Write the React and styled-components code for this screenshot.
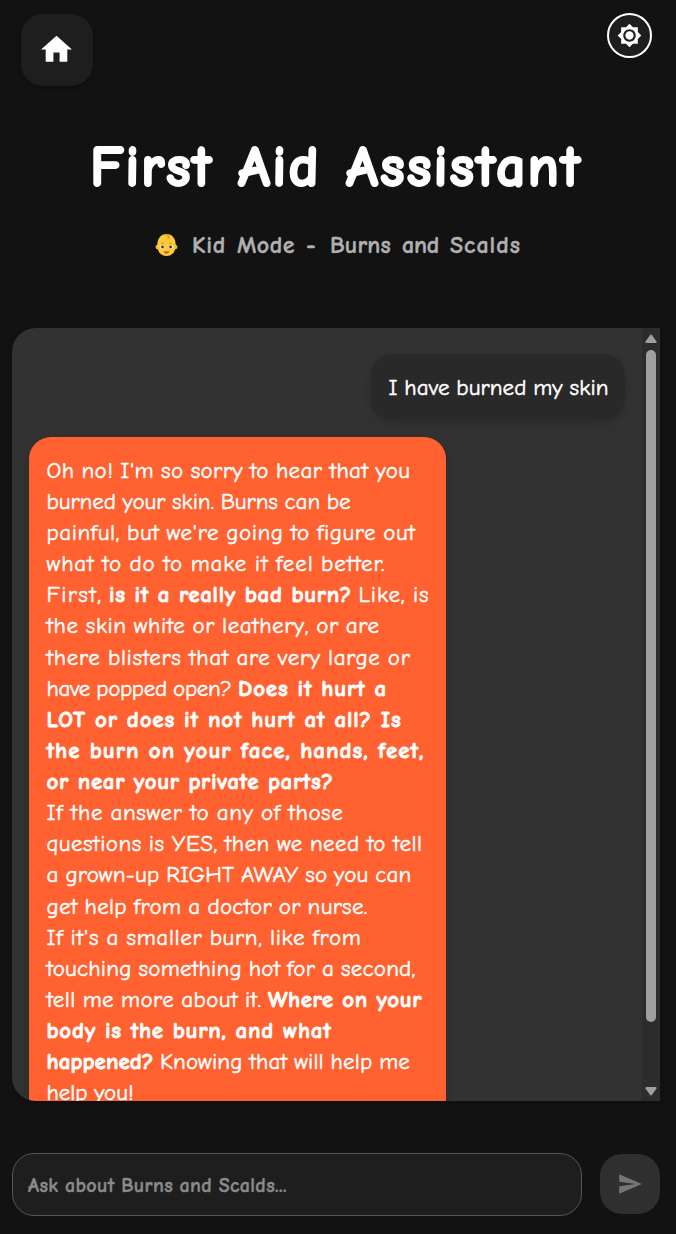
import React, { useLayoutEffect, useRef, useState } from "react";
import styled, { createGlobalStyle } from "styled-components";

const GlobalStyle = createGlobalStyle`
  * { box-sizing: border-box; }
  body {
    margin: 0;
    background: #121212;
    color: #fff;
    font-family: "Comic Sans MS", "Comic Neue", "Open Sans", sans-serif;
    overflow: hidden;
  }
  button { font: inherit; padding: 0; border: 0; color: inherit; }
`;

const Page = styled.main`
  height: 1234px;
  padding: 13px 16px 18px 12px;
  display: flex;
  flex-direction: column;
`;

const TopBar = styled.header`
  display: flex;
  justify-content: space-between;
  align-items: flex-start;
  padding: 0 8px 0 9px;
  height: 73px;
`;

const HomeButton = styled.button`
  display: grid;
  place-items: center;
  width: 72px;
  height: 72px;
  margin-top: 1px;
  padding: 0 1px 1px 0;
  border-radius: 22px;
  background: #1e1e1e;
  box-shadow: 0 2px 5px rgba(0, 0, 0, 0.3);
`;

const ThemeButton = styled.button`
  display: grid;
  place-items: center;
  width: 45px;
  height: 45px;
  padding-bottom: 1px;
  border: 2px solid #fff;
  border-radius: 50%;
  background: #1e1e1e;
`;

const Icon = styled.svg`
  display: block;
  width: ${(p) => p.$size}px;
  height: ${(p) => p.$size}px;
  fill: currentColor;
`;

const Title = styled.h1`
  display: flex;
  gap: 25px;
  margin: 42px 0 0 78px;
  font-size: 58px;
  line-height: 80px;
  font-weight: 700;
  -webkit-text-stroke: 2px currentColor;
`;

const Subtitle = styled.h2`
  display: flex;
  align-items: center;
  gap: 11px;
  margin: 20px 0 0 143px;
  font-size: 24px;
  line-height: 34px;
  font-weight: 700;
  color: #b0b0b0;
  -webkit-text-stroke: 0.4px currentColor;
`;

const BabyFace = styled.svg`
  width: 23px;
  height: 24px;
  margin-right: 3px;
`;

const ChatPanel = styled.section`
  display: flex;
  height: 773px;
  margin-top: 66px;
  border-radius: 24px 0 0 24px;
  background: #323232;
  overflow: hidden;
  box-shadow: 0 3px 8px rgba(0, 0, 0, 0.2);
`;

const Messages = styled.div`
  flex: 1;
  display: flex;
  flex-direction: column;
  gap: 17px;
  padding: 26px 17px 0;
`;

const Bubble = styled.div`
  flex: none;
  align-self: ${(p) => (p.$user ? "flex-end" : "flex-start")};
  width: ${(p) => (p.$user ? 254 : 417)}px;
  padding: 17.9px 17.5px 16.9px;
  border-radius: 22px;
  background: ${(p) => (p.$user ? "#292929" : "#ff6130")};
  box-shadow: 0 3px 8px rgba(0, 0, 0, 0.16);
  font-size: 23px;
  word-spacing: -1px;
  -webkit-text-stroke: 0.5px currentColor;
`;

const Line = styled.div`
  display: flex;
  gap: 6.5px;
  height: 31.14px;
  line-height: 31.14px;
`;

const RunBox = styled.span`
  flex: none;
  display: block;
  width: ${(p) => p.$width}px;
  white-space: nowrap;
  font-weight: ${(p) => (p.$bold ? 700 : "inherit")};
  ${(p) => p.$bold && "-webkit-text-stroke-width: 0.8px; word-spacing: 0;"}
`;

const Scrollbar = styled.div`
  width: 18px;
  padding: 6px 3px 5px;
  background: #2c2c2c;
  display: flex;
  flex-direction: column;
  align-items: center;
`;

const Arrow = styled.svg`
  width: 12px;
  height: 10px;
  fill: #9f9f9f;
`;

const Thumb = styled.div`
  width: 10px;
  height: 672px;
  margin: 6px 0 auto;
  border-radius: 5px;
  background: #9f9f9f;
`;

const Composer = styled.form`
  display: flex;
  justify-content: space-between;
  align-items: flex-start;
  margin-top: 52px;
`;

const Field = styled.div`
  width: 570px;
  height: 63px;
  padding: 0 15px;
  border: 1px solid #555;
  border-radius: 22px;
  background: #1e1e1e;
  color: #8b8b8b;
  font-size: 20px;
  font-weight: 700;
  line-height: 63px;
  word-spacing: -1px;
  -webkit-text-stroke: 0.4px currentColor;

  span { font-weight: 700; }
`;

const SendButton = styled.button`
  display: grid;
  place-items: center;
  width: 60px;
  height: 60px;
  margin-top: 1px;
  border-radius: 22px;
  background: #2f2f2f;
  color: #757575;
`;

/* Spreads the letters of a run of text over a given width. */
function Run({ width, bold, children }) {
  const ref = useRef(null);
  const [spacing, setSpacing] = useState(0);
  useLayoutEffect(() => {
    const range = document.createRange();
    range.selectNodeContents(ref.current);
    const natural = range.getBoundingClientRect().width;
    setSpacing((width - natural) / children.length);
  }, [width, children]);
  return (
    <RunBox ref={ref} $width={width} $bold={bold} style={{ letterSpacing: spacing }}>
      {children}
    </RunBox>
  );
}

const reply = [
  [["Oh no! I'm so sorry to hear that you", 364]],
  [["burned your skin. Burns can be", 304]],
  [["painful, but we're going to figure out", 369]],
  [["what to do to make it feel better.", 339]],
  [["First,", 56], ["is it a really bad burn?", 243, true], ["Like, is", 71]],
  [["the skin white or leathery, or are", 333]],
  [["there blisters that are very large or", 364]],
  [["have popped open?", 185], ["Does it hurt a", 149, true]],
  [["LOT or does it not hurt at all? Is", 355, true]],
  [["the burn on your face, hands, feet,", 378, true]],
  [["or near your private parts?", 287, true]],
  [["If the answer to any of those", 297]],
  [["questions is YES, then we need to tell", 376]],
  [["a grown-up RIGHT AWAY so you can", 365]],
  [["get help from a doctor or nurse.", 321]],
  [["If it's a smaller burn, like from", 315]],
  [["touching something hot for a second,", 369]],
  [["tell me more about it.", 215], ["Where on your", 154, true]],
  [["body is the burn, and what", 285, true]],
  [["happened?", 107, true], ["Knowing that will help me", 250]],
  [["help you!", 87]],
];

export default function App() {
  return (
    <>
      <GlobalStyle />
      <Page>
        <TopBar>
          <HomeButton aria-label="Home">
            <Icon $size={37} viewBox="0 0 24 24">
              <path d="M10 20v-6h4v6h5v-8h3L12 3 2 12h3v8z" />
            </Icon>
          </HomeButton>
          <ThemeButton aria-label="Theme">
            <Icon $size={25} viewBox="0 0 24 24">
              <path d="M20 8.69V4h-4.69L12 .69 8.69 4H4v4.69L.69 12 4 15.31V20h4.69L12 23.31 15.31 20H20v-4.69L23.31 12 20 8.69zM12 18c-3.31 0-6-2.69-6-6s2.69-6 6-6 6 2.69 6 6-2.69 6-6 6zm0-10c-2.21 0-4 1.79-4 4s1.79 4 4 4 4-1.79 4-4-1.79-4-4-4z" />
            </Icon>
          </ThemeButton>
        </TopBar>
        <Title>
          <Run width={123}>First</Run>
          <Run width={83}>Aid</Run>
          <Run width={236}>Assistant</Run>
        </Title>
        <Subtitle>
          <BabyFace viewBox="0 0 23 24">
            <circle cx="2.8" cy="14" r="2.3" fill="#f5b72f" />
            <circle cx="20.2" cy="14" r="2.3" fill="#f5b72f" />
            <path d="M11.5 1C6 1 2.300 5.500 2.300 12c0 7 3.700 11 9.200 11s9.200-4 9.200-11c0-6.500-3.700-11-9.200-11z" fill="#ffca3a" />
            <path d="M8.5 1.8c3-1.8 6.2-.3 6.2 2.2 0 1.6-1.3 2.3-2.2 1.7 1-1.5.2-2.7-4-3.9z" fill="#e99a1c" />
            <path d="M6 10.5q1.5-1 3 0M14 10.5q1.5-1 3 0" stroke="#d98e1b" strokeWidth=".9" fill="none" />
            <circle cx="7" cy="14" r="1.9" fill="#fff" />
            <circle cx="16" cy="14" r="1.9" fill="#fff" />
            <circle cx="7.4" cy="14" r="1.4" fill="#3f3339" />
            <circle cx="15.6" cy="14" r="1.4" fill="#3f3339" />
            <path d="M8.5 18q3 1 6 0-.8 2.6-3 2.6t-3-2.6z" fill="#cf4030" />
          </BabyFace>
          <Run width={34}>Kid</Run>
          <Run width={58}>Mode</Run>
          <Run width={13}>-</Run>
          <Run width={61}>Burns</Run>
          <Run width={37}>and</Run>
          <Run width={71}>Scalds</Run>
        </Subtitle>
        <ChatPanel>
          <Messages>
            <Bubble $user>
              <Line>
                <Run width={220}>I have burned my skin</Run>
              </Line>
            </Bubble>
            <Bubble>
              {reply.map((line, i) => (
                <Line key={i}>
                  {line.map(([text, width, bold]) => (
                    <Run key={text} width={width} bold={bold}>{text}</Run>
                  ))}
                </Line>
              ))}
            </Bubble>
          </Messages>
          <Scrollbar>
            <Arrow viewBox="0 0 12 10">
              <path d="M5 1.2Q6 0 7 1.2L11.5 7.5Q12 9 10.5 9H1.5Q0 9 .5 7.5z" />
            </Arrow>
            <Thumb />
            <Arrow viewBox="0 0 12 10">
              <path d="M5 8.8Q6 10 7 8.8L11.5 2.5Q12 1 10.5 1H1.5Q0 1 .5 2.5z" />
            </Arrow>
          </Scrollbar>
        </ChatPanel>
        <Composer>
          <Field>
            <Run width={259}>Ask about Burns and Scalds...</Run>
          </Field>
          <SendButton type="button" aria-label="Send">
            <Icon $size={26} viewBox="0 0 24 24">
              <path d="M2.01 21 23 12 2.01 3 2 10l15 2-15 2z" />
            </Icon>
          </SendButton>
        </Composer>
      </Page>
    </>
  );
}
